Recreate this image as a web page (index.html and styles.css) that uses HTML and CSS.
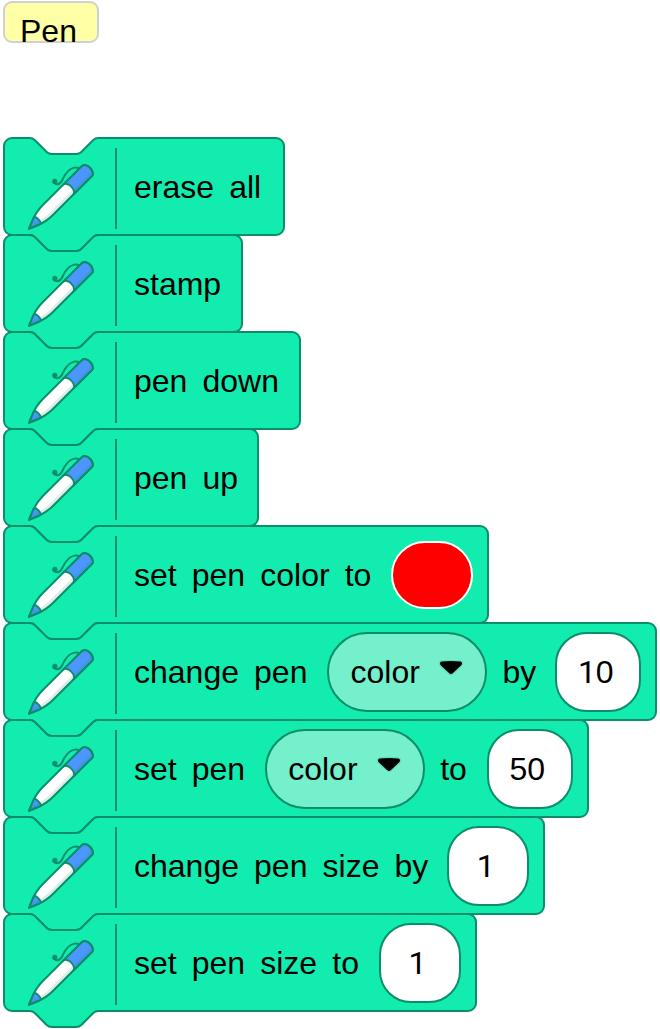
FILE: index.html
```
<!DOCTYPE html>
<html lang="en">
<head>
<meta charset="utf-8">
<title>Pen blocks</title>
<link rel="stylesheet" href="styles.css">
</head>
<body>
<svg class="defs" width="0" height="0" aria-hidden="true">
  <symbol id="pen" viewBox="0 0 40 40">
    <g stroke="#0b8e69" stroke-linecap="round" stroke-linejoin="round" fill="none">
      <path fill="#fff" d="M8.753 34.602l-4.251 1.779 1.784-4.236c1.218-2.892 2.907-5.423 5.03-7.538L31.066 4.93c.846-.842 2.65-.41 4.032.967 1.38 1.375 1.816 3.173.97 4.015L16.318 29.59c-2.123 2.116-4.664 3.799-7.565 5.012"/>
      <path d="M29.41 6.11s-4.45-2.379-8.202 5.771c-1.734 3.766-4.35 1.546-4.35 1.546"/>
      <path fill="#4c97ff" d="M36.42 8.825c0 .463-.14.873-.432 1.164l-9.335 9.301c.282-.29.41-.668.41-1.12 0-.874-.507-1.963-1.406-2.868-1.362-1.358-3.147-1.8-4.002-.99L30.99 5.01c.844-.84 2.65-.41 4.035.96.898.904 1.396 1.982 1.396 2.855M10.515 33.774a23.74 23.74 0 0 1-1.764.83L4.5 36.382l1.786-4.235c.258-.604.529-1.186.833-1.757.69.183 1.449.625 2.109 1.282.659.658 1.102 1.412 1.287 2.102"/>
    </g>
    <path fill="#0b8e69" fill-opacity=".15" d="M36.498 8.748c0 .464-.141.874-.433 1.165l-19.742 19.68c-2.131 2.111-4.673 3.793-7.572 5.01L4.5 36.381l.974-2.317 1.925-.808c2.899-1.218 5.441-2.899 7.572-5.01l19.742-19.68c.292-.292.432-.702.432-1.165 0-.647-.27-1.4-.779-2.123.249.172.498.377.736.614.898.905 1.396 1.983 1.396 2.856"/>
    <circle cx="17.4" cy="12.7" r="1.2" fill="#0b8e69" stroke="#0b8e69" stroke-width=".3"/>
  </symbol>
  <symbol id="arrow" viewBox="0 0 28 20">
    <path d="M4.500 3.500Q14 2.500 23.500 3.500Q26 4.500 24.500 7L16 15Q14 16.800 12 15L3.500 7Q2 4.500 4.500 3.500Z" fill="#000" stroke="#0b8e69" stroke-opacity=".18" stroke-width="2.500" paint-order="stroke"/>
  </symbol>
</svg>

<header class="category">Pen</header>

<main class="palette">
  <div class="block w-erase">
    <svg class="shape"><path/></svg>
    <svg class="pen"><use href="#pen"/></svg><span class="divider"></span>
    <span class="label">erase all</span>
  </div>
  <div class="block w-stamp">
    <svg class="shape"><path/></svg>
    <svg class="pen"><use href="#pen"/></svg><span class="divider"></span>
    <span class="label">stamp</span>
  </div>
  <div class="block w-down">
    <svg class="shape"><path/></svg>
    <svg class="pen"><use href="#pen"/></svg><span class="divider"></span>
    <span class="label">pen down</span>
  </div>
  <div class="block w-up">
    <svg class="shape"><path/></svg>
    <svg class="pen"><use href="#pen"/></svg><span class="divider"></span>
    <span class="label">pen up</span>
  </div>
  <div class="block w-color">
    <svg class="shape"><path/></svg>
    <svg class="pen"><use href="#pen"/></svg><span class="divider"></span>
    <span class="label">set pen color to</span>
    <span class="swatch"></span>
  </div>
  <div class="block w-change">
    <svg class="shape"><path/></svg>
    <svg class="pen"><use href="#pen"/></svg><span class="divider"></span>
    <span class="label">change pen</span>
    <span class="dropdown">color<svg class="arrow"><use href="#arrow"/></svg></span>
    <span class="label after">by</span>
    <span class="number two"><span class="one">1</span>0</span>
  </div>
  <div class="block w-set">
    <svg class="shape"><path/></svg>
    <svg class="pen"><use href="#pen"/></svg><span class="divider"></span>
    <span class="label">set pen</span>
    <span class="dropdown">color<svg class="arrow"><use href="#arrow"/></svg></span>
    <span class="label after">to</span>
    <span class="number two">50</span>
  </div>
  <div class="block w-change-size">
    <svg class="shape"><path/></svg>
    <svg class="pen"><use href="#pen"/></svg><span class="divider"></span>
    <span class="label">change pen size by</span>
    <span class="number one">1</span>
  </div>
  <div class="block w-set-size">
    <svg class="shape"><path/></svg>
    <svg class="pen"><use href="#pen"/></svg><span class="divider"></span>
    <span class="label">set pen size to</span>
    <span class="number one">1</span>
  </div>
</main>
<script src="blocks.js"></script>
</body>
</html>
```
FILE: styles.css
```
* { box-sizing: border-box; }

body {
  margin: 0;
  background: #fff;
  color: #000;
  font: 32px/37px "Liberation Sans", Arial, sans-serif;
}

.defs { display: block; }

.category {
  width: 96px;
  height: 42px;
  margin: 1px 0 95px 3px;
  padding: 10px 0 0 15px;
  border: 2px solid #d0d1d2;
  border-radius: 9px;
  background: #ffffa5;
}

.palette { padding: 0 0 18px 4px; }

.block {
  position: relative;
  display: flex;
  align-items: center;
  height: 97px;
}

.w-erase { width: 280px; }
.w-stamp { width: 238px; }
.w-down { width: 296px; }
.w-up { width: 254px; }
.w-color { width: 484px; }
.w-change { width: 652px; }
.w-set { width: 584px; }
.w-change-size { width: 540px; }
.w-set-size { width: 472px; }

/* Outline with notch and tab, drawn behind the row's content */
.shape {
  position: absolute;
  inset: 0;
  width: 100%;
  height: 100%;
  overflow: visible;
  fill: #13ecaf;
  stroke: #0b8e69;
  stroke-width: 2px;
}

.block > :not(.shape) {
  z-index: 1;
  flex: none;
}

.pen {
  width: 80px;
  height: 80px;
  margin: 18px 1px 0 16px;
}

.divider {
  width: 2px;
  height: 81px;
  margin: 3px 17px 0 14px;
  background: #0b8e69;
}

.label {
  padding-top: 2px;
  white-space: nowrap;
  word-spacing: 6.2px;
}

.after { margin-left: 15px; }

.swatch,
.dropdown,
.number {
  display: flex;
  align-items: center;
  margin-left: 20px;
  border: 2px solid #0b8e69;
}

.swatch {
  width: 82px;
  height: 68px;
  border-color: #fff;
  border-radius: 34px;
  background: #f00;
}

.dropdown {
  width: 160px;
  height: 80px;
  padding: 2px 0 0 21px;
  border-radius: 40px;
  background: #75f0cd;
}

.arrow {
  width: 28px;
  height: 20px;
  margin: -10px 0 0 17px;
}

.number {
  justify-content: center;
  width: 82px;
  height: 80px;
  padding: 2px 5px 0 0;
  border-radius: 32px;
  background: #fff;
}

.one { font-family: Roboto, "Liberation Sans", sans-serif; }

.two { width: 86px; }

.w-change .number,
.w-change-size .number { margin-left: 19px; }
```
FILE: blocks.js
```
// Draws each stack block's outline to the width of its row.
document.querySelectorAll('.block').forEach(function (block) {
  var w = block.offsetWidth;
  var h = block.offsetHeight;
  var notch = 'c2 0 3.7.7 5 2l12 12c1.3 1.3 3 2 5 2h24.6c2 0 3.7-.7 5-2l12-12c1.3-1.3 3-2 5-2';
  var tab = 'c-2 0-3.7.7-5 2l-12 12c-1.3 1.3-3 2-5 2h-24.6c-2 0-3.7-.7-5-2l-12-12c-1.3-1.3-3-2-5-2';
  block.querySelector('.shape path').setAttribute('d',
    'M0 8a8 8 0 0 1 8-8H25.7' + notch +
    'H' + (w - 8) + 'a8 8 0 0 1 8 8V' + (h - 8) + 'a8 8 0 0 1-8 8H94.3' + tab +
    'H8a8 8 0 0 1-8-8Z');
});
```
